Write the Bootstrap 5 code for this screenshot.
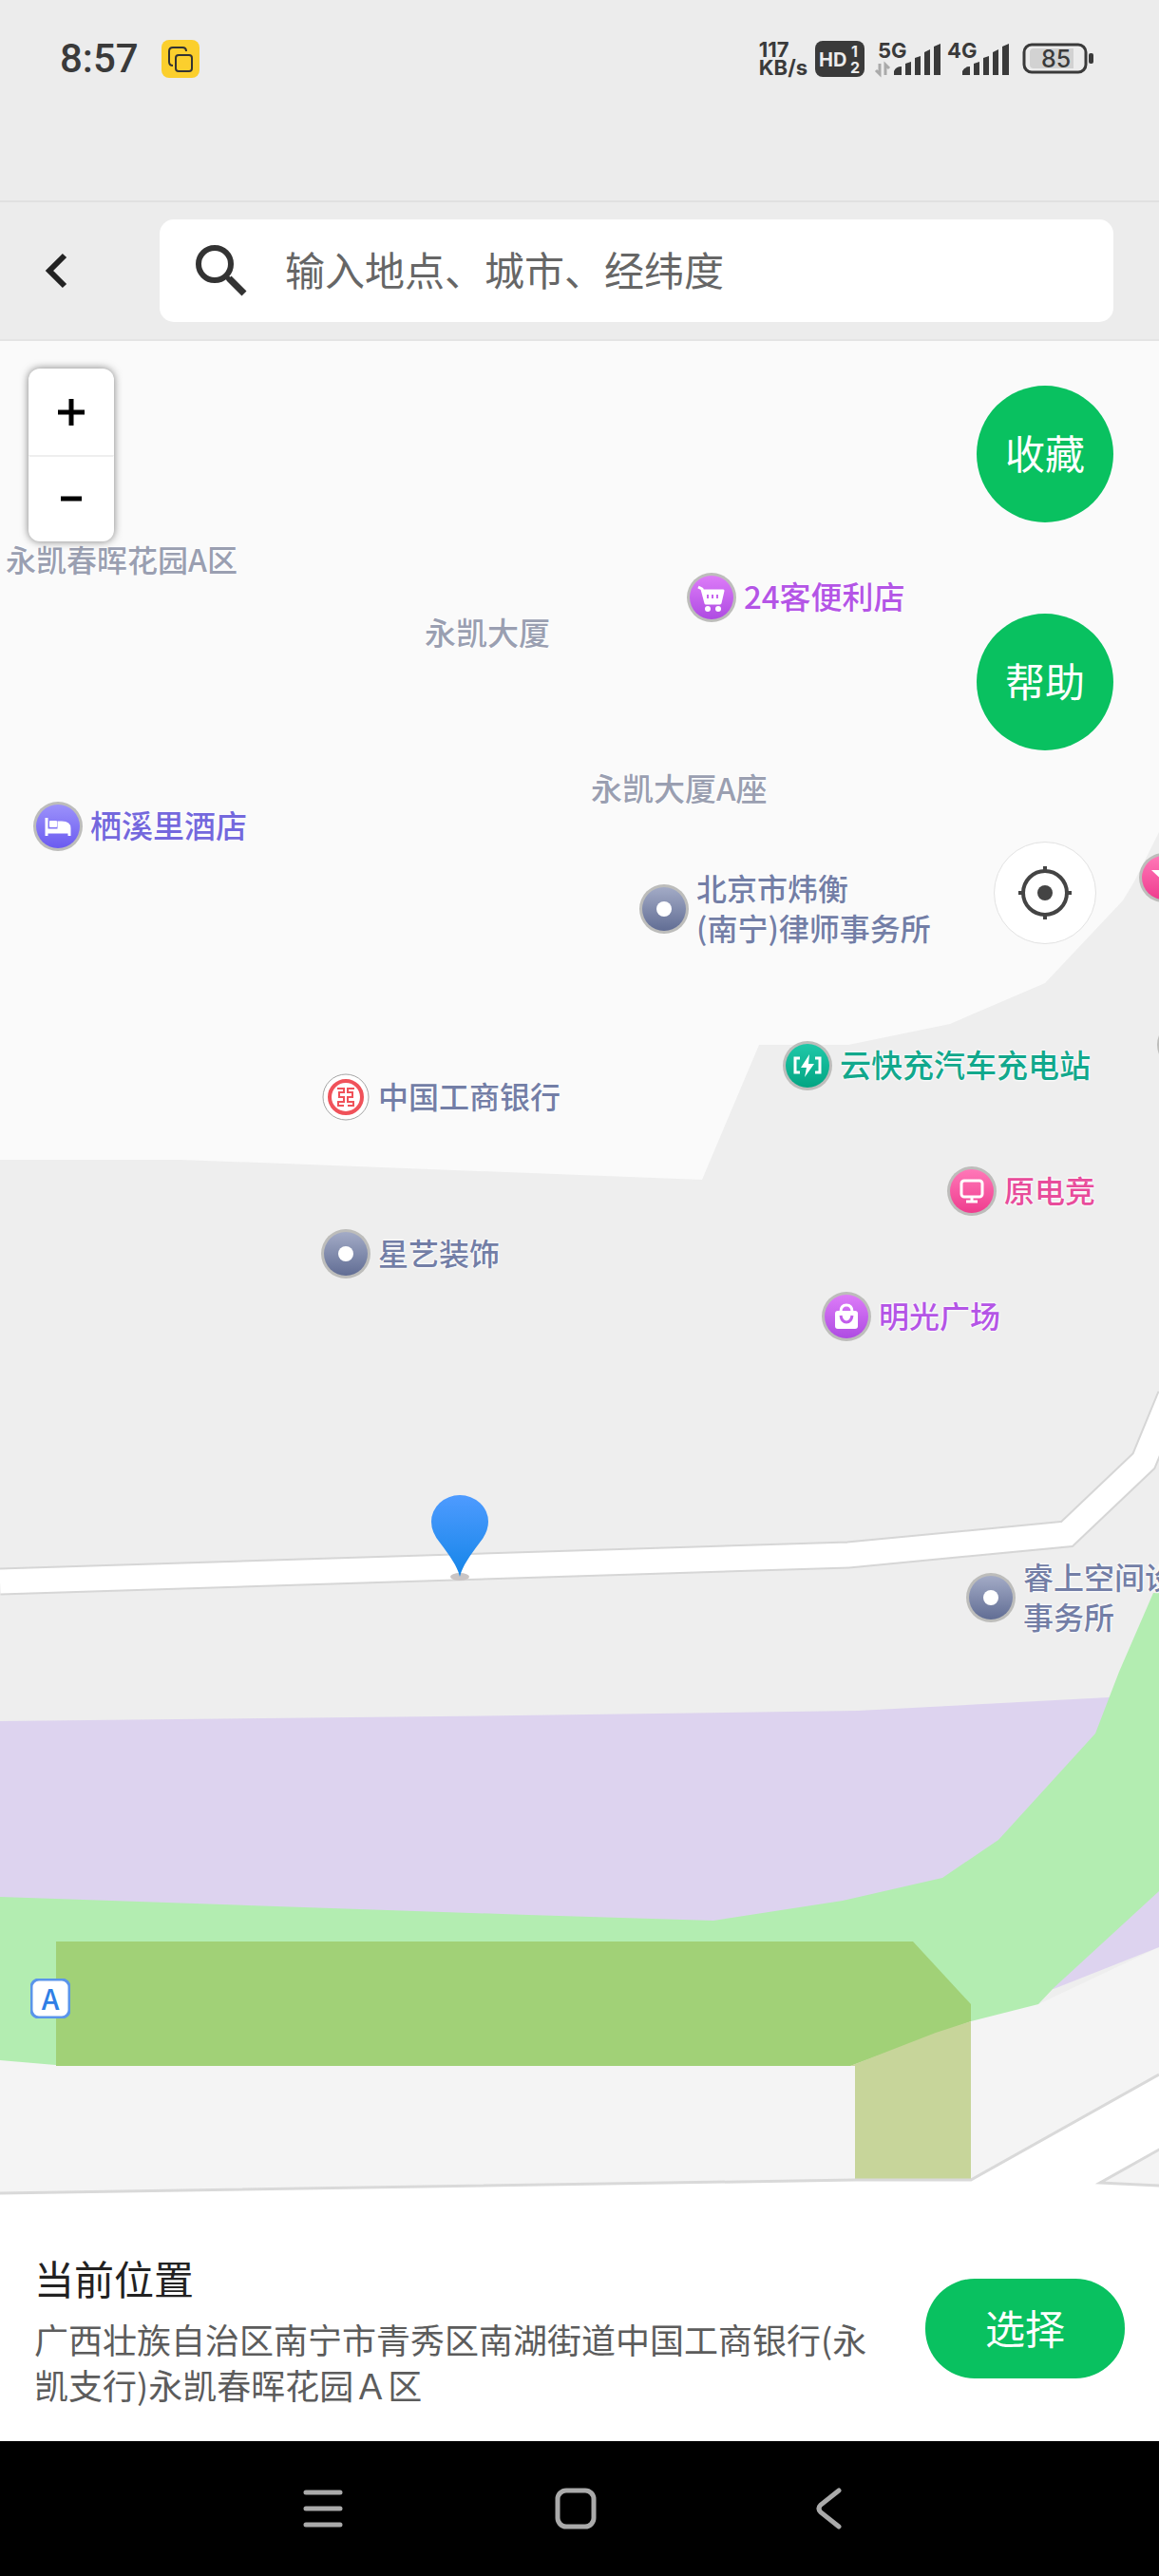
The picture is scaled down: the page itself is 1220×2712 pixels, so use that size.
<!DOCTYPE html>
<html lang="zh-CN">
<head>
<meta charset="utf-8">
<meta name="viewport" content="width=device-width, initial-scale=1">
<title>选择位置</title>
<link rel="stylesheet" href="https://cdn.jsdelivr.net/npm/bootstrap@5.3.0/dist/css/bootstrap.min.css">
<style>
body{font-family:"Noto Sans CJK SC",sans-serif;background:#ececec;color:#262626;overflow-x:hidden}
svg{display:block;flex:none}
/* system status bar */
.statusbar{height:124px;margin-bottom:87px;padding:0 68px 0 63px;color:#3a3a3a;font-family:Inter,sans-serif;font-weight:700}
.statusbar svg{overflow:visible}
.clock{font:500 42px/48px Roboto,sans-serif}
.speed{font-size:22px;line-height:19px}
/* search header */
.apphead{height:148px;border-top:2px solid #e0e0e0;border-bottom:2px solid #e4e4e4;padding-right:48px}
.backbtn{width:168px;padding-left:47px}
.searchbox{height:108px;background:#fff;border-radius:15px;padding-left:38px}
.searchbox input{font-size:42px;color:#333;padding:0 0 4px;margin-left:40px;line-height:60px}
.searchbox input::placeholder{color:#666;opacity:1}
.searchbox input:focus{box-shadow:none}
/* map */
.mapstage{min-height:1100px;background:#eee}
.mapland{left:0;top:0;width:100%;height:100%}
.poi{position:absolute;display:flex;align-items:center;gap:8px;transform:translateY(-50%);white-space:nowrap;font-size:32px;line-height:42px;font-weight:500;color:#737ea6;text-decoration:none;text-shadow:0 0 3px #fff,0 0 3px #fff,0 0 2px #fff}
.poi span{padding-bottom:4px}
.poi.wide{font-size:33px}
.poi.area{color:#9a9fb1}
.poi.hotel{color:#7468dd}.poi.shop{color:#b455e6}.poi.ev{color:#12a88c}.poi.game{color:#e84c9b}
.zoomctl{left:30px;top:29px;width:90px;border-radius:12px;background:#fff;box-shadow:0 0 8px rgba(0,0,0,.5)}
.zoomctl button{height:91px;border-radius:0;padding:0}
.zoomctl button+button{border-top:2px solid #eee}
.sidectl{right:48px;top:47px;gap:96px}
.roundbtn{width:144px;height:144px;border-radius:50%;font-size:42px;padding:0 0 6px}
.locbtn{width:108px;height:108px;border-radius:50%;background:#fff;border:1px solid #e2e2e2;padding:0}
.gobtn,.roundbtn{background:#09c160;color:#fff}
.marker{left:454px;top:1215px}
/* address panel */
.panel{background:#fff;padding:55px 36px 36px}
.ptitle{font-size:42px;line-height:60px;color:#222}
.paddr{font-size:36px;line-height:48px;color:#5c5c5c;margin-top:10px}
.gobtn{width:210px;height:105px;border-radius:52px;font-size:42px;padding:0 0 4px;flex:none}
.navkeys{height:142px;background:#000;gap:206px;padding-right:8px}
.navkeys button{width:60px;height:60px;padding:0}
</style>
</head>
<body>
<svg width="0" height="0" class="position-absolute" aria-hidden="true">
  <defs>
    <linearGradient id="gGrey" x1="0" y1="0" x2="0" y2="1"><stop offset="0" stop-color="#a3abc6"/><stop offset="1" stop-color="#616d94"/></linearGradient>
    <linearGradient id="gBlue" x1="0" y1="0" x2="0" y2="1"><stop offset="0" stop-color="#9c92fb"/><stop offset="1" stop-color="#6b5bf0"/></linearGradient>
    <linearGradient id="gViolet" x1="0" y1="0" x2="0" y2="1"><stop offset="0" stop-color="#dd7cf8"/><stop offset="1" stop-color="#ae4be2"/></linearGradient>
    <linearGradient id="gTeal" x1="0" y1="0" x2="0" y2="1"><stop offset="0" stop-color="#1fc8a8"/><stop offset="1" stop-color="#03a583"/></linearGradient>
    <linearGradient id="gPink" x1="0" y1="0" x2="0" y2="1"><stop offset="0" stop-color="#ff78b8"/><stop offset="1" stop-color="#ef3c8e"/></linearGradient>
    <linearGradient id="gPin" x1="0" y1="0" x2="0" y2="1"><stop offset="0" stop-color="#4e9bff"/><stop offset="1" stop-color="#1585e8"/></linearGradient>
    <g id="dot"><circle cx="26" cy="26" r="26" fill="#bdbdbb"/><circle cx="26" cy="26" r="23" fill="url(#gGrey)"/><circle cx="26" cy="26" r="8" fill="#fff"/></g>
  </defs>
</svg>
<div class="d-flex flex-column min-vh-100">
  <div class="statusbar d-flex justify-content-between align-items-center">
    <div class="d-flex align-items-center">
      <span class="clock">8:57</span>
      <svg class="ms-4" width="40" height="40" viewBox="0 0 40 40"><rect width="40" height="40" rx="8" fill="#fbcf2d"/><path d="M12 27q-4 0-4-4V12q0-4 4-4h10q4 0 4 4" fill="none" stroke="#333" stroke-width="2"/><rect x="15" y="16" width="17" height="17" rx="3" fill="none" stroke="#333" stroke-width="2"/></svg>
    </div>
    <div class="d-flex align-items-center">
      <div class="speed me-2">117<br>KB/s</div>
      <svg width="52" height="38" viewBox="0 0 52 38"><rect width="52" height="38" rx="8" fill="#3a3a3a"/><text x="4" y="27" font-size="20" fill="#ececec">HD</text><text x="38" y="17" font-size="16" fill="#ececec">1</text><text x="37" y="34" font-size="16" fill="#ececec">2</text></svg>
      <svg class="ms-2 me-1" width="154" height="38" viewBox="0 0 154 38" fill="#3a3a3a"><text x="6" y="18" font-size="22">5G</text><text x="79" y="18" font-size="22">4G</text><path d="M8 24v11l-4-4M14 36V25l4 4" fill="none" stroke="#aaa" stroke-width="3"/><path d="M23 36v-4q2-5 8-5v9zM35 36V24l6-2v14zM45 36V18l6-2v20zM55 36V12l6-3v27zM65 36V6l7-3v33zM95 36v-4q2-5 8-5v9zM107 36V24l6-2v14zM117 36V18l6-2v20zM127 36V12l6-3v27zM137 36V6l7-3v33z"/></svg>
      <svg width="76" height="34" viewBox="0 0 76 34"><rect x="2" y="2" width="65" height="29" rx="8" fill="none" stroke="#3a3a3a" stroke-width="3"/><path d="M12 6h42v21H12q-4 0-4-4V10q0-4 4-4z" fill="#d2d2d2"/><rect x="70" y="11" width="5" height="11" rx="2" fill="#3a3a3a"/><text x="20" y="26" font-size="25" font-weight="500" fill="#3a3a3a">85</text></svg>
    </div>
  </div>

  <header class="apphead d-flex align-items-center">
    <button class="btn border-0 backbtn text-start" aria-label="返回"><svg width="24" height="38" viewBox="0 0 24 38"><path d="M21 3L5 19l16 16" fill="none" stroke="#222" stroke-width="6"/></svg></button>
    <div class="searchbox d-flex align-items-center flex-grow-1">
      <svg width="54" height="54" viewBox="0 0 54 54" fill="none" stroke="#333"><circle cx="20" cy="20" r="17" stroke-width="6"/><path d="M32 33l3 3" stroke-width="5"/><path d="M35 35l16 16" stroke-width="7"/></svg>
      <input class="form-control border-0 bg-transparent" type="text" aria-label="搜索地点" placeholder="输入地点、城市、经纬度">
    </div>
  </header>

  <main class="mapstage position-relative overflow-hidden flex-grow-1">
    <svg class="mapland position-absolute" viewBox="0 359 1220 1954" preserveAspectRatio="xMidYMin slice">
      <rect y="357" width="1220" height="1956" fill="#eee"/>
      <path d="M0 357H1220V876L1194 928L1182 948L1100 1035L1000 1078L893 1100H799L739 1242L300 1225L190 1221H0z" fill="#fafafa"/>
      <path d="M0 1665L893 1637L1123 1615L1204 1538L1232 1470" fill="none" stroke="#d6d6d6" stroke-width="29"/>
      <path d="M0 1665L893 1637L1123 1615L1204 1538L1232 1470" fill="none" stroke="#fff" stroke-width="25"/>
      <path d="M0 2169V2309L900 2295H1022L1220 2184V2050L1093 2110z" fill="#f4f4f4"/>
      <path d="M0 1812L545 1806L903 1801L1167 1787L1220 1760V2050L1109 2094L700 2060L0 2050z" fill="#ddd3ef"/>
      <path d="M0 1997L556 2016L751 2022L887 2001L992 1977L1051 1937L1153 1825L1178 1760L1214 1677H1220V1991L1109 2093L1093 2110L1022 2128L895 2175H70L0 2169z" fill="#b3edb1"/>
      <path d="M59 2044H961L1022 2110V2128L895 2175H59z" fill="#a1d177"/>
      <path d="M1022 2128V2294H900V2175H895L985 2140z" fill="#c7d59a"/>
      <path d="M0 2309L900 2295H1022L1220 2184V2313H0z" fill="#fff"/>
      <path d="M0 2309L900 2295H1022L1220 2184" fill="none" stroke="#d9d9d9" stroke-width="3"/>
      <path d="M1222 2262L1158 2298L1222 2301z" fill="#f4f4f4" stroke="#d9d9d9" stroke-width="3"/>
    </svg>

    <a class="poi area" href="#" style="left:6px;top:231px"><span>永凯春晖花园A区</span></a>
    <a class="poi area wide" href="#" style="left:447px;top:308px"><span>永凯大厦</span></a>
    <a class="poi area wide" href="#" style="left:622px;top:472px"><span>永凯大厦A座</span></a>
    <a class="poi shop wide" href="#" style="left:723px;top:270px"><svg width="52" height="52" viewBox="0 0 52 52"><circle cx="26" cy="26" r="26" fill="#bdbdbb"/><circle cx="26" cy="26" r="23" fill="url(#gViolet)"/><path d="M12 15l4 2 4 15h15l3-13H17" fill="#fff" stroke="#fff" stroke-width="3" stroke-linejoin="round"/><path d="M22 23v4M27 23v4M32 23v4" stroke="#c765ee" stroke-width="2"/><circle cx="22" cy="38" r="3" fill="#fff"/><circle cx="33" cy="38" r="3" fill="#fff"/></svg><span>24客便利店</span></a>
    <a class="poi hotel wide" href="#" style="left:35px;top:511px"><svg width="52" height="52" viewBox="0 0 52 52"><circle cx="26" cy="26" r="26" fill="#bdbdbb"/><circle cx="26" cy="26" r="23" fill="url(#gBlue)"/><path d="M14 17v19M14 32h24v4M38 32v-4q0-6-8-6h-3v8H14" fill="none" stroke="#fff" stroke-width="3"/><path d="M27 22h3q8 0 8 6v4H14v-3h13z" fill="#fff"/><rect x="17" y="20" width="8" height="7" rx="1" fill="#fff"/></svg><span>栖溪里酒店</span></a>
    <a class="poi" href="#" style="left:673px;top:598px"><svg width="52" height="52"><use href="#dot"/></svg><span>北京市炜衡<br>(南宁)律师事务所</span></a>
    <a class="poi" href="#" style="left:338px;top:796px"><svg width="52" height="52" viewBox="0 0 52 52"><circle cx="26" cy="26" r="24" fill="#fff" stroke="#a5a5a5" stroke-width="1"/><circle cx="26" cy="26" r="17" fill="#fff" stroke="#f0525a" stroke-width="4"/><path d="M17 17h7v4h-5v5h5v5h-6v4h6M35 17h-7v4h5v5h-5v5h6v4h-6" fill="none" stroke="#f0525a" stroke-width="2"/></svg><span>中国工商银行</span></a>
    <a class="poi" href="#" style="left:338px;top:961px"><svg width="52" height="52"><use href="#dot"/></svg><span>星艺装饰</span></a>
    <a class="poi ev wide" href="#" style="left:824px;top:763px"><svg width="52" height="52" viewBox="0 0 52 52"><circle cx="26" cy="26" r="26" fill="#bdbdbb"/><circle cx="26" cy="26" r="23" fill="url(#gTeal)"/><path d="M18 18h-5v15h5M34 18h5v15h-5" fill="none" stroke="#fff" stroke-width="3"/><path d="M28 14l-9 14h6l-2 10 10-14h-6z" fill="#fff"/></svg><span>云快充汽车充电站</span></a>
    <a class="poi game" href="#" style="left:997px;top:895px"><svg width="52" height="52" viewBox="0 0 52 52"><circle cx="26" cy="26" r="26" fill="#bdbdbb"/><circle cx="26" cy="26" r="23" fill="url(#gPink)"/><rect x="15" y="15" width="22" height="17" rx="3" fill="none" stroke="#fff" stroke-width="3"/><path d="M26 32v4M20 37h12" stroke="#fff" stroke-width="3"/></svg><span>原电竞</span></a>
    <a class="poi shop" href="#" style="left:865px;top:1027px"><svg width="52" height="52" viewBox="0 0 52 52"><circle cx="26" cy="26" r="26" fill="#bdbdbb"/><circle cx="26" cy="26" r="23" fill="url(#gViolet)"/><rect x="14" y="20" width="24" height="19" rx="3" fill="#fff"/><path d="M20 21q0-7 6-7t6 7" fill="none" stroke="#fff" stroke-width="3"/><path d="M20 25q1 7 6 7t6-7" fill="none" stroke="#c25eec" stroke-width="3"/></svg><span>明光广场</span></a>
    <a class="poi" href="#" style="left:1017px;top:1323px"><svg width="52" height="52"><use href="#dot"/></svg><span>睿上空间设<br>事务所</span></a>
    <a class="poi game" href="#" style="left:1199px;top:565px" aria-label="餐饮"><svg width="52" height="52" viewBox="0 0 52 52"><circle cx="26" cy="26" r="26" fill="#bdbdbb"/><circle cx="26" cy="26" r="23" fill="url(#gPink)"/><path d="M13 18h26L26 30z" fill="#fff"/></svg></a>
    <a class="poi" href="#" style="left:1218px;top:741px" aria-label="地点"><svg width="52" height="52"><use href="#dot"/></svg></a>
    <a class="poi" href="#" style="left:32px;top:1745px" aria-label="A 出口"><svg width="42" height="42" viewBox="0 0 42 42"><rect x="1" y="1" width="40" height="40" rx="8" fill="#fff" stroke="#5a95ea" stroke-width="3"/><text x="21" y="33" text-anchor="middle" font-size="30" fill="#2f7fe6">A</text></svg></a>

    <svg class="marker position-absolute" width="60" height="90" viewBox="0 0 60 90"><ellipse cx="30" cy="86" rx="10" ry="4" fill="#c9c4c4"/><path d="M30 86C27 74 20 65 9 50Q0 39 0 28A30 28 0 0 1 60 28Q60 39 51 50C40 65 33 74 30 86z" fill="url(#gPin)"/></svg>

    <div class="zoomctl position-absolute d-flex flex-column">
      <button class="btn d-flex align-items-center justify-content-center" aria-label="放大"><svg width="28" height="28"><path d="M14 0v28M0 14h28" stroke="#000" stroke-width="5"/></svg></button>
      <button class="btn d-flex align-items-center justify-content-center" aria-label="缩小"><svg width="22" height="6"><path d="M0 3h22" stroke="#000" stroke-width="5"/></svg></button>
    </div>
    <div class="sidectl position-absolute d-flex flex-column align-items-center">
      <button class="btn roundbtn">收藏</button>
      <button class="btn roundbtn">帮助</button>
      <button class="btn locbtn d-flex align-items-center justify-content-center" aria-label="定位"><svg width="56" height="56" viewBox="0 0 56 56" fill="none" stroke="#444" stroke-width="4"><circle cx="28" cy="28" r="23"/><circle cx="28" cy="28" r="8" fill="#444" stroke="none"/><path d="M28 0v6M28 50v6M0 28h6M50 28h6"/></svg></button>
    </div>
  </main>

  <section class="panel d-flex align-items-center justify-content-between">
    <div class="me-5">
      <h1 class="ptitle fw-normal mb-0">当前位置</h1>
      <p class="paddr mb-0">广西壮族自治区南宁市青秀区南湖街道中国工商银行(永凯支行)永凯春晖花园Ａ区</p>
    </div>
    <button class="btn gobtn">选择</button>
  </section>
  <nav class="navkeys d-flex align-items-center justify-content-center">
    <button class="btn border-0 d-flex align-items-center justify-content-center" aria-label="最近任务"><svg width="42" height="42"><path d="M3 4h36M3 21h36M3 38h36" stroke="#aaa" stroke-width="5" stroke-linecap="round"/></svg></button>
    <button class="btn border-0 d-flex align-items-center justify-content-center" aria-label="主页"><svg width="44" height="44"><rect x="3" y="3" width="38" height="38" rx="9" fill="none" stroke="#aaa" stroke-width="5"/></svg></button>
    <button class="btn border-0 d-flex align-items-center justify-content-center" aria-label="返回上一页"><svg width="28" height="44"><path d="M25 3L6 18q-4 4 0 8l19 15" fill="none" stroke="#aaa" stroke-width="5" stroke-linecap="round"/></svg></button>
  </nav>
</div>
<script src="https://cdn.jsdelivr.net/npm/bootstrap@5.3.0/dist/js/bootstrap.bundle.min.js"></script>
</body>
</html>
